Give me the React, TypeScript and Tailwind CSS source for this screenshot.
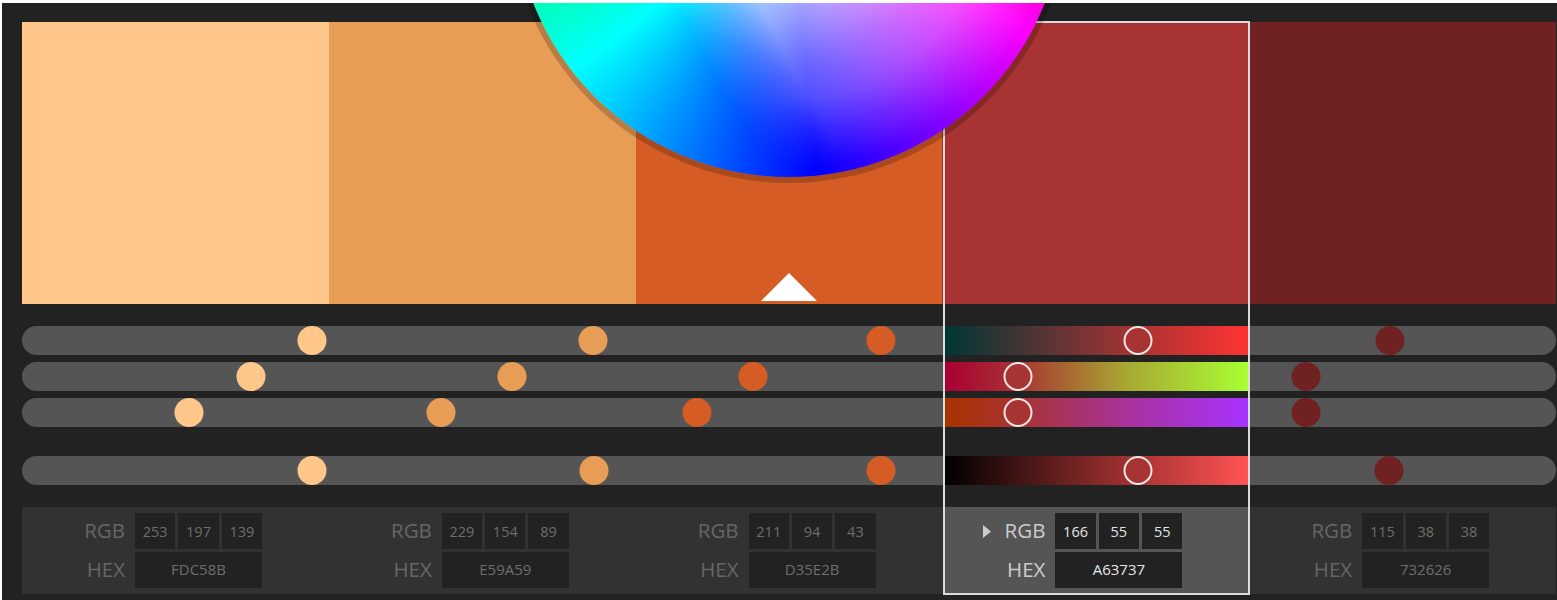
const swatches = [
  { color: '#ffc88a', rgb: ['253', '197', '139'], hex: 'FDC58B', knobs: [312, 251, 189, 312] },
  { color: '#e89d56', rgb: ['229', '154', '89'], hex: 'E59A59', knobs: [593, 511.5, 440.5, 594] },
  { color: '#d55c25', rgb: ['211', '94', '43'], hex: 'D35E2B', knobs: [880.5, 753, 697, 880.5] },
  { color: '#a83333', rgb: ['166', '55', '55'], hex: 'A63737', knobs: [1138, 1018, 1018, 1138] },
  { color: '#702222', rgb: ['115', '38', '38'], hex: '732626', knobs: [1390, 1306, 1306, 1389] },
];

const rows = [
  { gradient: 'bg-[linear-gradient(90deg,#003636,#a83333_63%,#ff3333)]', className: 'mb-[7px]' },
  { gradient: 'bg-[linear-gradient(90deg,#a80033,#a83333_24%,#a8a833_60%,#a8ff33)]', className: 'mb-[7px]' },
  { gradient: 'bg-[linear-gradient(90deg,#a83300,#a83333_24%,#a833a8_65%,#a833ff)]', className: 'mb-[29px]' },
  { gradient: 'bg-[linear-gradient(90deg,#000000,#a83333_63%,#ff5353)]', className: 'mb-[22px]' },
];

function SliderRow({ index }: { index: number }) {
  const row = rows[index];
  return (
    <div className={`relative h-[29px] rounded-full bg-[#555555] ${row.className}`}>
      <div className={`absolute left-[923px] top-0 h-full w-[303px] ${row.gradient}`} />
      {swatches.map((s, i) => (
        <div
          key={s.hex}
          className={`absolute top-0 h-[29px] w-[29px] -translate-x-1/2 rounded-full ${i === 3 ? 'border-2 border-[#f0e4e4]' : ''}`}
          style={{ left: s.knobs[index] - 22, backgroundColor: s.color }}
        />
      ))}
    </div>
  );
}

function Readout({ swatch, active }: { swatch: (typeof swatches)[number]; active: boolean }) {
  const boxClass = `flex h-[36px] items-center justify-center bg-[#222222] ${active ? 'font-medium text-[#e6e6e6]' : 'text-[#6e6e6e]'}`;
  return (
    <div className="flex flex-1 items-center">
      <div className={`ml-[62px] mr-[10px] flex w-[41px] flex-col items-end gap-[3px] text-[20.5px] ${active ? 'text-[#cccccc]' : 'text-[#666666]'}`}>
        <div className="flex h-[36px] items-center pb-[2px]">RGB</div>
        <div className="flex h-[36px] items-center pb-[2px]">HEX</div>
      </div>
      <div className="flex w-[127px] flex-col gap-[3px]">
        <div className="grid grid-cols-3 gap-[3px] text-[14.5px]">
          {swatch.rgb.map((v, i) => (
            <div key={i} className={`${boxClass} pt-[1px]`}>{v}</div>
          ))}
        </div>
        <div className={`${boxClass} pb-[2px] text-[15px]`}>{swatch.hex}</div>
      </div>
    </div>
  );
}

export default function App() {
  return (
    <div
      className="relative h-[600px] w-[1557px] overflow-hidden bg-white pl-[2px] pt-[3px]"
      style={{ fontFamily: '"Open Sans", sans-serif' }}
    >
      <div className="relative h-[597px] w-[1555px] overflow-hidden bg-[#222222] pl-[20px] pt-[19px]">
        {/* Colour swatches */}
        <div className="relative flex h-[282px] w-[1534px]">
          {swatches.map((s) => (
            <div key={s.hex} className="flex-1" style={{ backgroundColor: s.color }} />
          ))}
          <svg className="absolute bottom-[3px] left-[739px]" width="56" height="28" viewBox="0 0 56 28">
            <path d="M0 28 L28 0 L56 28 Z" fill="#ffffff" />
          </svg>
        </div>

        {/* Sliders */}
        <div className="mt-[22px] w-[1534px]">
          {rows.map((_, i) => (
            <SliderRow key={i} index={i} />
          ))}
        </div>

        {/* Values */}
        <div className="relative flex h-[87px] w-[1534px] bg-[#323232]">
          <div className="absolute left-[921px] top-0 h-full w-[306px] bg-[#555555]" />
          <svg className="absolute left-[961px] top-[18px]" width="8" height="13" viewBox="0 0 8 13">
            <path d="M0 0 L8 6.5 L0 13 Z" fill="#cccccc" />
          </svg>
          {swatches.map((s, i) => (
            <div key={s.hex} className="relative flex flex-1">
              <Readout swatch={s} active={i === 3} />
            </div>
          ))}
        </div>

        {/* Selected column outline */}
        <div className="absolute left-[941px] top-[18px] h-[574px] w-[307px] border-2 border-[#dcdcdc]" />

        {/* Colour wheel */}
        <div className="absolute left-[512px] top-[-376px] h-[550px] w-[550px] rounded-full bg-[conic-gradient(from_0deg,#ffff00,#ff0000_60deg,#ff00ff_118deg,#0000ff_174deg,#00ffff_232deg,#00ff00_292deg,#ffff00)] shadow-[0_0_0_6px_rgba(0,0,0,0.2)]">
          <div className="h-full w-full rounded-full bg-[radial-gradient(circle_closest-side,rgba(255,255,255,0.95),rgba(255,255,255,0.65)_36%,rgba(255,255,255,0.42)_57%,rgba(255,255,255,0.3)_72%,rgba(255,255,255,0.15)_84%,rgba(255,255,255,0)_97%)] [mask-image:linear-gradient(61.6deg,transparent_30%,black_40%)]" />
        </div>
      </div>
    </div>
  );
}
